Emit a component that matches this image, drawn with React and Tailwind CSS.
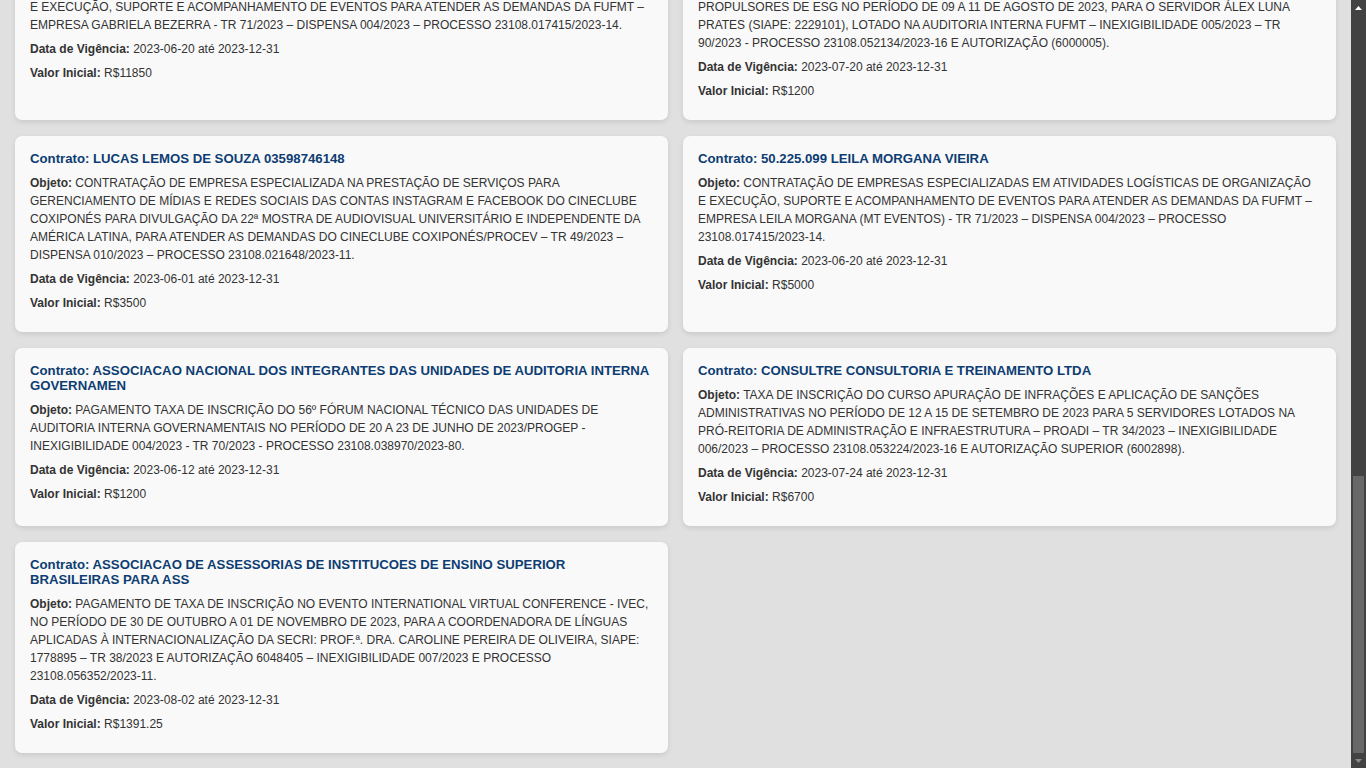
const CONTRATOS = [
  {
    nome: "GABRIELA BEZERRA DE ARRUDA",
    objeto: [
      "CONTRATAÇÃO DE EMPRESAS ESPECIALIZADAS EM ATIVIDADES LOGÍSTICAS DE ORGANIZAÇÃO E EXECUÇÃO, SUPORTE E ACOMPANHAMENTO DE EVENTOS PARA ATENDER AS DEMANDAS DA FUFMT – EMPRESA GABRIELA BEZERRA - TR 71/2023 – DISPENSA 004/2023 – PROCESSO 23108.017415/2023-14.",
    ],
    inicio: "2023-06-20",
    fim: "2023-12-31",
    valor: "R$11850",
  },
  {
    nome: "ASSOCIACAO BRASILEIRA DE GOVERNANCA",
    objeto: [
      "PAGAMENTO DE TAXA DE INSCRIÇÃO NO CURSO DE FORMAÇÃO DE AGENTES",
      "PROPULSORES DE ESG NO PERÍODO DE 09 A 11 DE AGOSTO DE 2023, PARA O SERVIDOR ÁLEX LUNA PRATES (SIAPE: 2229101), LOTADO NA AUDITORIA INTERNA FUFMT – INEXIGIBILIDADE 005/2023 – TR 90/2023 - PROCESSO 23108.052134/2023-16 E AUTORIZAÇÃO (6000005).",
    ],
    inicio: "2023-07-20",
    fim: "2023-12-31",
    valor: "R$1200",
  },
  {
    nome: "LUCAS LEMOS DE SOUZA 03598746148",
    objeto: [
      "CONTRATAÇÃO DE EMPRESA ESPECIALIZADA NA PRESTAÇÃO DE SERVIÇOS PARA GERENCIAMENTO DE MÍDIAS E REDES SOCIAIS DAS CONTAS INSTAGRAM E FACEBOOK DO CINECLUBE COXIPONÉS PARA DIVULGAÇÃO DA 22ª MOSTRA DE AUDIOVISUAL UNIVERSITÁRIO E INDEPENDENTE DA AMÉRICA LATINA, PARA ATENDER AS DEMANDAS DO CINECLUBE COXIPONÉS/PROCEV – TR 49/2023 – DISPENSA 010/2023 – PROCESSO 23108.021648/2023-11.",
    ],
    inicio: "2023-06-01",
    fim: "2023-12-31",
    valor: "R$3500",
  },
  {
    nome: "50.225.099 LEILA MORGANA VIEIRA",
    objeto: [
      "CONTRATAÇÃO DE EMPRESAS ESPECIALIZADAS EM ATIVIDADES LOGÍSTICAS DE ORGANIZAÇÃO E EXECUÇÃO, SUPORTE E ACOMPANHAMENTO DE EVENTOS PARA ATENDER AS DEMANDAS DA FUFMT – EMPRESA LEILA MORGANA (MT EVENTOS) - TR 71/2023 – DISPENSA 004/2023 – PROCESSO 23108.017415/2023-14.",
    ],
    inicio: "2023-06-20",
    fim: "2023-12-31",
    valor: "R$5000",
  },
  {
    nome: "ASSOCIACAO NACIONAL DOS INTEGRANTES DAS UNIDADES DE AUDITORIA INTERNA GOVERNAMEN",
    objeto: [
      "PAGAMENTO TAXA DE INSCRIÇÃO DO 56º FÓRUM NACIONAL TÉCNICO DAS UNIDADES DE AUDITORIA INTERNA GOVERNAMENTAIS NO PERÍODO DE 20 A 23 DE JUNHO DE 2023/PROGEP - INEXIGIBILIDADE 004/2023 - TR 70/2023 - PROCESSO 23108.038970/2023-80.",
    ],
    inicio: "2023-06-12",
    fim: "2023-12-31",
    valor: "R$1200",
  },
  {
    nome: "CONSULTRE CONSULTORIA E TREINAMENTO LTDA",
    objeto: [
      "TAXA DE INSCRIÇÃO DO CURSO APURAÇÃO DE INFRAÇÕES E APLICAÇÃO DE SANÇÕES ADMINISTRATIVAS NO PERÍODO DE 12 A 15 DE SETEMBRO DE 2023 PARA 5 SERVIDORES LOTADOS NA PRÓ-REITORIA DE ADMINISTRAÇÃO E INFRAESTRUTURA – PROADI – TR 34/2023 – INEXIGIBILIDADE 006/2023 – PROCESSO 23108.053224/2023-16 E AUTORIZAÇÃO SUPERIOR (6002898).",
    ],
    inicio: "2023-07-24",
    fim: "2023-12-31",
    valor: "R$6700",
  },
  {
    nome: "ASSOCIACAO DE ASSESSORIAS DE INSTITUCOES DE ENSINO SUPERIOR BRASILEIRAS PARA ASS",
    objeto: [
      "PAGAMENTO DE TAXA DE INSCRIÇÃO NO EVENTO INTERNATIONAL VIRTUAL CONFERENCE - IVEC, NO PERÍODO DE 30 DE OUTUBRO A 01 DE NOVEMBRO DE 2023, PARA A COORDENADORA DE LÍNGUAS APLICADAS À INTERNACIONALIZAÇÃO DA SECRI: PROF.ª. DRA. CAROLINE PEREIRA DE OLIVEIRA, SIAPE: 1778895 – TR 38/2023 E AUTORIZAÇÃO 6048405 – INEXIGIBILIDADE 007/2023 E PROCESSO 23108.056352/2023-11.",
    ],
    inicio: "2023-08-02",
    fim: "2023-12-31",
    valor: "R$1391.25",
  },
];

function ContratoCard({ c }) {
  return (
    <div className="rounded-[7px] bg-[#f9f9f9] px-[15px] pt-[15px] pb-[20px] shadow-[0_2px_5px_rgba(0,0,0,0.1)]">
      <h3 className="mb-[8px] text-[13.2px] leading-[15px] font-bold text-[#0d3d73]">Contrato: {c.nome}</h3>
      <p className="text-[12px] leading-[18px] text-[#333]">
        <strong>Objeto:</strong>{" "}
        {c.objeto.map((part, i) => (
          <span key={i}>
            {i > 0 && <br />}
            {part}
          </span>
        ))}
      </p>
      <p className="mt-[6px] text-[12px] leading-[18px] text-[#333]">
        <strong>Data de Vigência:</strong> {c.inicio} até {c.fim}
      </p>
      <p className="mt-[6px] text-[12px] leading-[18px] text-[#333]">
        <strong>Valor Inicial:</strong> {c.valor}
      </p>
    </div>
  );
}

function Scrollbar() {
  return (
    <div className="flex w-[15px] shrink-0 flex-col bg-[#424242]">
      <div className="flex h-[15px] items-center justify-center">
        <svg width="7" height="4" viewBox="0 0 7 4">
          <path d="M0 4 L3.5 0 L7 4 Z" fill="#ffffff" />
        </svg>
      </div>
      <div className="flex flex-1 flex-col justify-end px-[2px]">
        <div className="h-[277px] bg-[#686868]" />
      </div>
      <div className="flex h-[15px] items-center justify-center">
        <svg width="7" height="4" viewBox="0 0 7 4">
          <path d="M0 0 L7 0 L3.5 4 Z" fill="#8a8a8a" />
        </svg>
      </div>
    </div>
  );
}

export default function App() {
  return (
    <div className="flex h-screen overflow-hidden bg-[#e0e0e0] font-['Liberation_Sans',Arial,sans-serif]">
      <div className="flex flex-1 flex-col justify-end overflow-hidden">
        <div className="grid shrink-0 grid-cols-2 gap-x-[15px] gap-y-[16px] px-[15px] pt-[15px] pb-[15px]">
          {CONTRATOS.map((c, i) => (
            <ContratoCard key={i} c={c} />
          ))}
        </div>
      </div>
      <Scrollbar />
    </div>
  );
}
